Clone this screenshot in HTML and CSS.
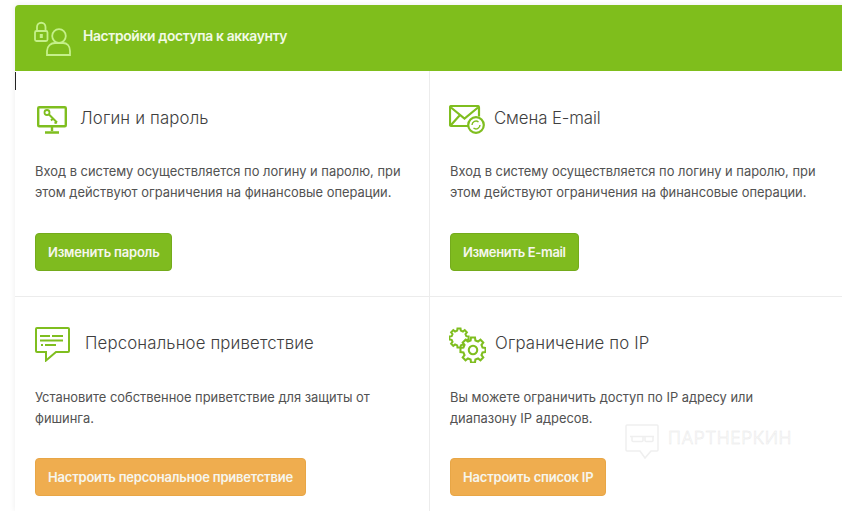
FILE: index.html
```html
<!DOCTYPE html>
<html lang="ru">
<head>
<meta charset="utf-8">
<title>Настройки доступа к аккаунту</title>
<link rel="stylesheet" href="styles.css">
</head>
<body>
<main class="card">
  <header class="card-head">
    <svg class="head-icon" width="38" height="36" viewBox="0 0 38 36" fill="none" stroke="#c5f08a" stroke-width="1.800">
      <rect x="2" y="10" width="12.500" height="10" rx="1.500"/>
      <path d="M4 10V6a4.200 4.200 0 0 1 8.500 0v4"/>
      <rect x="6.800" y="13" width="3" height="4" fill="#c5f08a" stroke="none"/>
      <circle cx="26" cy="15" r="6.800"/>
      <path d="M14 34v-4c0-5 4-8 8-8h8c4 0 7 3 7 8v4z"/>
    </svg>
    <h1 class="head-title">Настройки доступа к аккаунту</h1>
  </header>
  <span class="caret"></span>
  <div class="grid">
    <section class="cell">
      <div class="cell-title">
        <svg class="icon icon-monitor" width="30" height="28" viewBox="0 0 30 28" fill="none" stroke="#7fbe1f" stroke-width="2.400">
          <rect x="1.200" y="1.200" width="27.600" height="19" rx="1"/>
          <path d="M15 20v5M8 26.500h14"/>
          <circle cx="10" cy="6.500" r="2.500" stroke-width="1.800"/>
          <path d="M12 8.500l8 8M16 12.500l-2 2M20 16.500l-2.500 .5" stroke-width="2"/>
        </svg>
        <h2 class="title-text">Логин и пароль</h2>
      </div>
      <p class="desc">Вход в систему осуществляется по логину и паролю, при этом действуют ограничения на финансовые операции.</p>
      <a class="btn btn-green">Изменить пароль</a>
    </section>
    <section class="cell">
      <div class="cell-title">
        <svg class="icon icon-mail" width="36" height="30" viewBox="0 0 36 30" fill="none" stroke="#7fbe1f" stroke-width="2.200">
          <path d="M19 21H2.500a1.500 1.500 0 0 1-1.500-1.500V2.500A1.500 1.500 0 0 1 2.500 1h26a1.500 1.500 0 0 1 1.500 1.500v9"/>
          <path d="M2 2.500l13.500 11L29 2.500M2 20l9-10"/>
          <circle cx="27" cy="20" r="7.800"/>
          <path d="M23 20a4 4 0 0 1 6.500-3M31 20a4 4 0 0 1-6.500 3" stroke-width="1.400"/>
        </svg>
        <h2 class="title-text title-tight">Смена E-mail</h2>
      </div>
      <p class="desc">Вход в систему осуществляется по логину и паролю, при этом действуют ограничения на финансовые операции.</p>
      <a class="btn btn-green btn-tight">Изменить E-mail</a>
    </section>
    <section class="cell">
      <div class="cell-title">
        <svg class="icon icon-chat" width="35" height="35" viewBox="0 0 35 35" fill="none" stroke="#7fbe1f" stroke-width="2">
          <path d="M2 1h31a1 1 0 0 1 1 1v22a1 1 0 0 1-1 1H21l-10 8.500V25H2a1 1 0 0 1-1-1V2a1 1 0 0 1 1-1z"/>
          <path d="M5 9h10M17 9h11M5 13.500h23M6 18h2M10 18h11" stroke-width="1.800"/>
        </svg>
        <h2 class="title-text">Персональное приветствие</h2>
      </div>
      <p class="desc">Установите собственное приветствие для защиты от фишинга.</p>
      <a class="btn btn-orange">Настроить персональное приветствие</a>
    </section>
    <section class="cell">
      <div class="cell-title">
        <svg class="icon icon-gears" width="37" height="36" viewBox="0 0 37 36" fill="#fff" stroke="#7fbe1f">
          <g transform="translate(10 11) scale(.72)" stroke-width="2.800">
            <path d="M-2.540-10.190-2.110-13.330 2.110-13.330 2.540-10.190 5.410-9 7.930-10.920 10.920-7.930 9-5.410 10.190-2.540 13.330-2.110 13.330 2.110 10.190 2.540 9 5.410 10.920 7.930 7.930 10.920 5.410 9 2.540 10.190 2.110 13.330-2.110 13.330-2.540 10.190-5.410 9-7.930 10.920-10.920 7.930-9 5.410-10.190 2.540-13.330 2.110-13.330-2.110-10.190-2.540-9-5.410-10.920-7.930-7.930-10.920-5.410-9z"/>
          </g>
          <g transform="translate(24 23) scale(.94)" stroke-width="2.200">
            <path d="M-2.540-10.190-2.110-13.330 2.110-13.330 2.540-10.190 5.410-9 7.930-10.920 10.920-7.930 9-5.410 10.190-2.540 13.330-2.110 13.330 2.110 10.190 2.540 9 5.410 10.920 7.930 7.930 10.920 5.410 9 2.540 10.190 2.110 13.330-2.110 13.330-2.540 10.190-5.410 9-7.930 10.920-10.920 7.930-9 5.410-10.190 2.540-13.330 2.110-13.330-2.110-10.190-2.540-9-5.410-10.920-7.930-7.930-10.920-5.410-9z"/>
            <circle r="4.500"/>
          </g>
        </svg>
        <h2 class="title-text">Ограничение по IP</h2>
      </div>
      <p class="desc">Вы можете ограничить доступ по IP адресу или диапазону IP адресов.</p>
      <a class="btn btn-orange">Настроить список IP</a>
    </section>
  </div>
</main>
<div class="watermark">
  <svg width="34" height="36" viewBox="0 0 34 36" fill="none" stroke="#efefef" stroke-width="1.500">
    <path d="M2 1h30a1 1 0 0 1 1 1v24a1 1 0 0 1-1 1H26l-6 7-5-7H2a1 1 0 0 1-1-1V2a1 1 0 0 1 1-1z"/>
    <path d="M5 12.500h24M7 12.500v4a1 1 0 0 0 1 1h9a1 1 0 0 0 1-1v-4M20 12.500v4a1 1 0 0 0 1 1h6a1 1 0 0 0 1-1v-4"/>
  </svg>
  <span class="watermark-text">ПАРТНЕРКИН</span>
</div>
</body>
</html>
```
FILE: styles.css
```css
html, body {
  margin: 0;
  height: 100%;
  overflow: hidden;
  background: #fff;
}
body {
  padding: 5px 0 0 15px;
  box-sizing: border-box;
  font-family: Inter, "Open Sans", sans-serif;
  color: #444;
}
.card {
  width: 840px;
  background: #fff;
  border-radius: 4px 0 0 0;
  box-shadow: 0 0 6px rgba(0, 0, 0, 0.08);
  position: relative;
}
.card-head {
  height: 66px;
  background: #7fbe1c;
  border-radius: 4px 0 0 0;
  display: flex;
  align-items: center;
  padding-left: 18px;
  gap: 12px;
}
.head-icon { flex: none; margin-top: 2px; }
.head-title {
  margin: 0 0 4px;
  font-size: 13.850px;
  font-weight: 600;
  color: #f2fae6;
  letter-spacing: -0.35px;
}
.caret {
  position: absolute;
  left: 0;
  top: 67px;
  width: 1px;
  height: 18px;
  background: #222;
}
.grid {
  display: grid;
  grid-template-columns: 415px 1fr;
  grid-template-rows: 226px 214px;
}
.cell {
  padding: 30px 20px 0;
  border-right: 1px solid #ececec;
  border-bottom: 1px solid #ececec;
  box-sizing: border-box;
}
.cell:nth-child(2n) { border-right: 0; }
.cell:nth-child(n+3) { border-bottom: 0; padding-top: 29px; }
.cell:nth-child(n+3) .desc { margin-top: 27px; }
.cell:nth-child(n+3) .btn { margin-top: 29px; }
.cell-title {
  display: flex;
  align-items: center;
  height: 34px;
}
.icon { flex: none; }
.icon-monitor { margin: 3px 13px 0 2px; }
.icon-mail { margin: 4px 9px 0 -1px; }
.icon-chat { margin: 3px 15px 0 0; }
.icon-gears { margin: 3px 9px 0 -1px; }
.title-text {
  margin: 0;
  font-size: 16.800px;
  font-weight: 300;
  color: #3e3e3e;
  letter-spacing: 0.15px;
}
.title-tight { letter-spacing: -0.1px; }
.desc {
  margin: 26px 0 0;
  width: 370px;
  font-size: 12.900px;
  line-height: 21px;
  color: #525252;
  height: 42px;
}
.btn {
  display: inline-block;
  margin-top: 30px;
  height: 38px;
  line-height: 36px;
  padding: 0 12px;
  box-sizing: border-box;
  border-radius: 4px;
  font-size: 13px;
  font-weight: 600;
  color: #f6f6ee;
  letter-spacing: -0.2px;
}
.btn-tight { letter-spacing: -0.34px; }
.btn-green { background: #7fbb1f; border: 1px solid #74ab1c; }
.btn-orange { background: #efad4f; border: 1px solid #e8a646; }
.watermark {
  position: absolute;
  left: 625px;
  top: 424px;
  display: flex;
  gap: 9px;
}
.watermark-text {
  font-size: 17.500px;
  font-weight: 300;
  line-height: 27px;
  color: #fff;
  -webkit-text-stroke: 0.5px #e8e8e8;
  letter-spacing: 0.5px;
}
```
